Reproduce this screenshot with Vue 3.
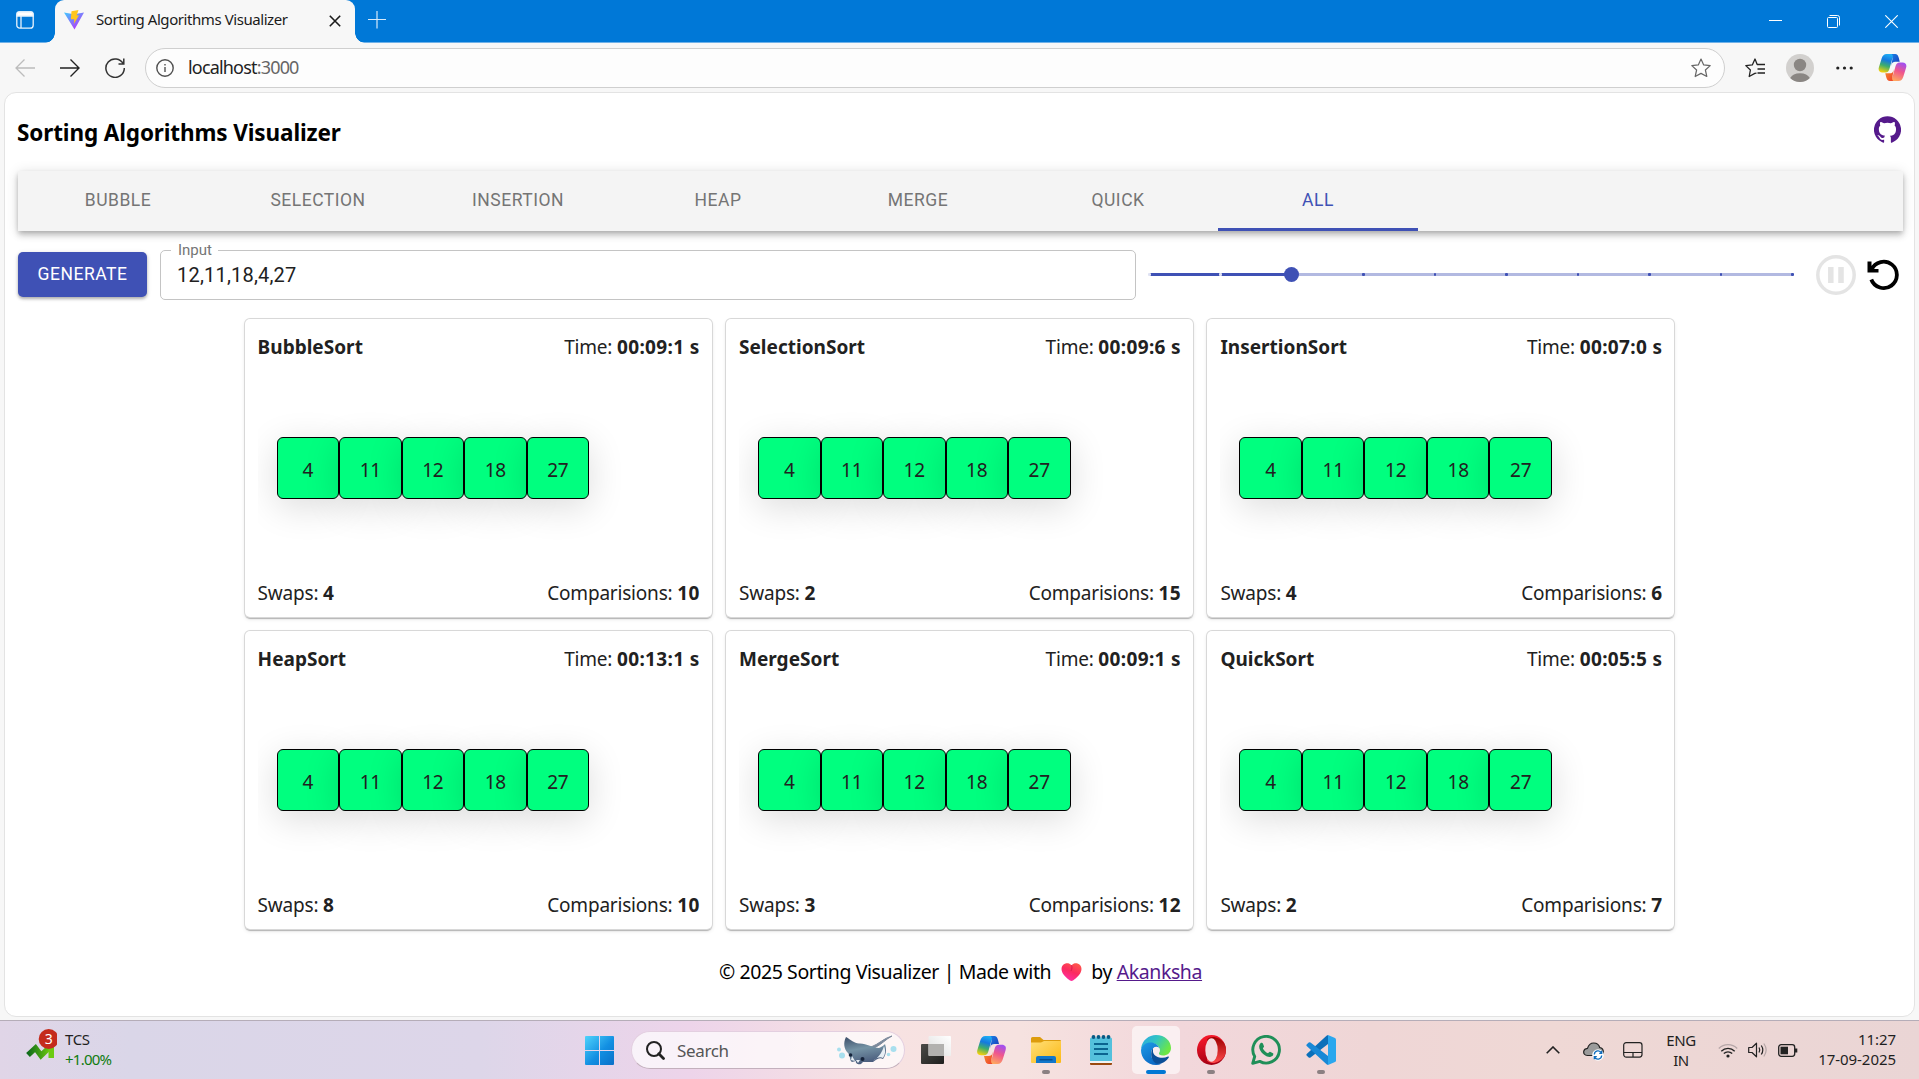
<script setup>
import { h } from 'vue'

const tabs = ['Bubble', 'Selection', 'Insertion', 'Heap', 'Merge', 'Quick', 'All']
const active = 'All'
const values = [4, 11, 12, 18, 27]
const marks = [0, 1, 2, 3, 4, 5, 6, 7, 8, 9]
const speed = 2

const sorts = [
  { name: 'BubbleSort', time: '00:09:1', swaps: 4, comparisons: 10 },
  { name: 'SelectionSort', time: '00:09:6', swaps: 2, comparisons: 15 },
  { name: 'InsertionSort', time: '00:07:0', swaps: 4, comparisons: 6 },
  { name: 'HeapSort', time: '00:13:1', swaps: 8, comparisons: 10 },
  { name: 'MergeSort', time: '00:09:1', swaps: 3, comparisons: 12 },
  { name: 'QuickSort', time: '00:05:5', swaps: 2, comparisons: 7 },
]

const CopilotIcon = (props) =>
  h('svg', { viewBox: '0 0 30 28', width: props.width, height: props.height }, [
    h('path', { d: 'M19 1.2C18.500 0.300 17.600 0 16.500 0H9C6.200 0 4.600 1.800 3.800 4.500L1 13.500C-0.200 17 1.400 19.200 4.600 19.200H7.500C10 19.200 11 18 11.800 15.500L14.500 6C15.500 3 16.500 1.500 19 1.200Z', fill: 'url(#cp-a)' }),
    h('path', { d: 'M14 0H17.500C20 0 20.800 1.500 21.500 4L22.500 8H18C15.500 8 14.800 8.800 14 11L13.500 12.500L15 5C15.800 3 15.500 1 14 0Z', fill: 'url(#cp-b)' }),
    h('path', { d: 'M11 26.800C11.500 27.700 12.400 28 13.500 28H21C23.800 28 25.400 26.200 26.200 23.500L29 14.500C30.200 11 28.600 8.800 25.400 8.800H22.500C20 8.800 19 10 18.200 12.500L15.500 22C14.500 25 13.500 26.500 11 26.800Z', fill: 'url(#cp-c)' }),
    h('path', { d: 'M16 28H12.500C10 28 9.200 26.500 8.500 24L7.500 20H12C14.500 20 15.200 19.200 16 17L16.500 15.500L15 23C14.200 25 14.500 27 16 28Z', fill: 'url(#cp-d)' }),
  ])
CopilotIcon.props = ['width', 'height']
</script>

<template>
  <div class="screen">
    <svg class="defs" width="0" height="0" aria-hidden="true">
      <defs>
        <linearGradient id="cp-a" x1="0.6" y1="0" x2="0.3" y2="1">
          <stop offset="0" stop-color="#1fb0f5" /><stop offset="0.35" stop-color="#1479e0" />
          <stop offset="0.65" stop-color="#3fae6b" /><stop offset="1" stop-color="#f4d00c" />
        </linearGradient>
        <linearGradient id="cp-b" x1="0" y1="0" x2="1" y2="1">
          <stop offset="0" stop-color="#1a7fe6" /><stop offset="1" stop-color="#1938b5" />
        </linearGradient>
        <linearGradient id="cp-c" x1="0.7" y1="0" x2="0.3" y2="1">
          <stop offset="0" stop-color="#a24ff0" /><stop offset="0.45" stop-color="#f0568c" />
          <stop offset="1" stop-color="#ffae5c" />
        </linearGradient>
        <linearGradient id="cp-d" x1="0" y1="0" x2="1" y2="1">
          <stop offset="0" stop-color="#f7902d" /><stop offset="1" stop-color="#ee3d2c" />
        </linearGradient>
      </defs>
    </svg>

    <header class="titlebar">
      <div class="workspace">
        <svg width="18" height="18" viewBox="0 0 18 18" fill="none" stroke="#e8f3fc" stroke-width="1.3">
          <rect x="0.8" y="0.8" width="16.400" height="16.400" rx="3" />
          <path d="M1 2.500Q1 1 3 1H15Q17 1 17 2.500V5H1Z" fill="#fff" />
          <path d="M5 5V17" />
        </svg>
      </div>
      <div class="tab">
        <svg class="favicon" width="20" height="20" viewBox="0 0 20 20">
          <defs>
            <linearGradient id="vt" x1="0" y1="0" x2="0.8" y2="1">
              <stop offset="0" stop-color="#41c9ff" /><stop offset="0.9" stop-color="#b03dfa" />
            </linearGradient>
          </defs>
          <path d="M0 2.600L10 4.300L20 2.600L10.500 19.500Z" fill="url(#vt)" />
          <path d="M7.500 1.200L14.500 0L12.600 5.500L15 5.200L9.800 14L10.300 9.200H6.800Z" fill="#ffc61c" />
        </svg>
        <span class="tab-title">Sorting Algorithms Visualizer</span>
        <svg class="tab-close" width="12" height="12" viewBox="0 0 12 12" stroke="#1b1b1b" stroke-width="1.6">
          <path d="M0.800 0.800L11.200 11.200M11.200 0.800L0.800 11.200" />
        </svg>
      </div>
      <svg class="new-tab" width="18" height="18" viewBox="0 0 18 18" stroke="#d6eafa" stroke-width="1.2">
        <path d="M9 0V17.500M0 8.500H18" />
      </svg>
      <div class="win-controls">
        <svg width="13" height="13" viewBox="0 0 13 13" stroke="#fff"><path d="M0 6.500H13" /></svg>
        <svg width="13" height="13" viewBox="0 0 13 13" fill="none" stroke="#fff">
          <rect x="0.500" y="2.500" width="10" height="10" rx="1" />
          <path d="M2.500 0.500H10.500Q12.500 0.500 12.500 2.500V10.500" />
        </svg>
        <svg width="13" height="13" viewBox="0 0 13 13" stroke="#fff" stroke-width="1.1"><path d="M0.300 0.300L12.700 12.700M12.700 0.300L0.300 12.700" /></svg>
      </div>
    </header>

    <div class="toolbar">
      <svg class="nav" width="20" height="20" viewBox="0 0 20 20" fill="none" stroke="#bcbcbc" stroke-width="1.300">
        <path d="M9.500 1.500L1 10L9.500 18.500M1 10H20" />
      </svg>
      <svg class="nav" width="20" height="20" viewBox="0 0 20 20" fill="none" stroke="#222" stroke-width="1.400">
        <path d="M10.500 1.500L19 10L10.500 18.500M19 10H0" />
      </svg>
      <svg class="nav" width="20" height="20" viewBox="0 0 20 20" fill="none" stroke="#333" stroke-width="1.500">
        <path d="M18.300 6A9.200 9.200 0 1 0 19.300 10M18.800 0.500V6H13.500" />
      </svg>
      <div class="address">
        <svg width="18" height="18" viewBox="0 0 18 18" fill="none" stroke="#505050" stroke-width="1.400">
          <circle cx="9" cy="9" r="8.200" /><path d="M9 8V13M9 5V6.500" />
        </svg>
        <span class="url">localhost<i>:3000</i></span>
        <svg class="star" width="20" height="20" viewBox="0 0 20 20" fill="none" stroke="#666" stroke-width="1.200" stroke-linejoin="round">
          <path d="M10 1L12.700 6.900L19.200 7.600L14.400 12L15.800 18.500L10 15.400L4.200 18.500L5.600 12L0.800 7.600L7.300 6.900Z" />
        </svg>
      </div>
      <svg class="favs" width="20" height="20" viewBox="0 0 20 20" fill="none" stroke="#222" stroke-width="1.300" stroke-linejoin="round">
        <path d="M11.500 15.200L9.800 15.400L4.200 18.500L5.400 12L0.800 7.600L7.300 6.900L10 1L12.200 6.500H20M12.500 11H20M12.500 15H20" />
      </svg>
      <svg class="avatar" width="28" height="28" viewBox="0 0 28 28">
        <circle cx="14" cy="14" r="14" fill="#d2d0ce" />
        <circle cx="14" cy="11" r="6.200" fill="#8a8683" />
        <path d="M4.200 24A10.500 7.500 0 0 1 23.800 24A14 14 0 0 1 4.200 24Z" fill="#8a8683" />
      </svg>
      <svg class="dots" width="17" height="4" viewBox="0 0 17 4" fill="#222">
        <circle cx="1.800" cy="2" r="1.600" /><circle cx="8.500" cy="2" r="1.600" /><circle cx="15.200" cy="2" r="1.600" />
      </svg>
      <CopilotIcon class="copilot" width="29" height="27" />
    </div>

    <main class="page">
      <div class="heading">
        <h3>Sorting Algorithms Visualizer</h3>
        <svg width="27" height="27" viewBox="0 0 24 24" fill="#551a8b">
          <path d="M12 .3a12 12 0 0 0-3.800 23.400c.6.1.8-.3.8-.6v-2c-3.300.7-4-1.600-4-1.600-.6-1.400-1.400-1.800-1.400-1.800-1-.7.1-.7.1-.7 1.200 0 1.900 1.200 1.900 1.200 1 1.800 2.800 1.300 3.500 1 0-.8.4-1.300.7-1.600-2.700-.3-5.500-1.300-5.500-6 0-1.200.5-2.300 1.300-3.100-.2-.4-.6-1.600 0-3.200 0 0 1-.3 3.400 1.200a11.500 11.500 0 0 1 6 0c2.300-1.500 3.300-1.200 3.300-1.200.6 1.600.2 2.800 0 3.200.9.8 1.300 1.900 1.300 3.200 0 4.600-2.800 5.600-5.500 5.900.5.4.9 1 .9 2.200v3.300c0 .3.1.7.8.6A12 12 0 0 0 12 .3" />
        </svg>
      </div>

      <nav class="tabs">
        <button v-for="t in tabs" :key="t" :class="{ active: t === active }">{{ t }}</button>
      </nav>

      <section class="controls">
        <button class="generate">Generate</button>
        <fieldset class="field">
          <legend>Input</legend>
          <span>12,11,18,4,27</span>
        </fieldset>
        <div class="slider">
          <div class="rail"></div>
          <div class="filled" :style="{ width: (speed / 9) * 100 + '%' }"></div>
          <i v-for="m in marks" :key="m" :class="{ on: m < speed }" :style="{ left: (m / 9) * 100 + '%' }"></i>
          <b :style="{ left: (speed / 9) * 100 + '%' }"></b>
        </div>
        <svg class="pause" width="40" height="40" viewBox="0 0 40 40" fill="none" stroke="#e4e4e4">
          <circle cx="20" cy="20" r="18.200" stroke-width="3.500" />
          <path d="M14.800 12V28M25 12V28" stroke-width="5.500" />
        </svg>
        <svg class="replay" width="32" height="32" viewBox="0 0 32 32" fill="none" stroke="#000" stroke-width="3.800">
          <path d="M4.300 20.500A13.200 13.200 0 1 0 4.600 10.500" />
          <path d="M0.500 2.500V13.500H11.500V10H7.500L4.500 6.500V2.500Z" fill="#000" stroke="none" />
        </svg>
      </section>

      <section class="grid">
        <article v-for="s in sorts" :key="s.name" class="card">
          <div class="row">
            <strong class="name">{{ s.name }}</strong>
            <span>Time: <strong>{{ s.time }} s</strong></span>
          </div>
          <div class="stage">
            <div v-for="v in values" :key="v" class="box">{{ v }}</div>
          </div>
          <div class="row">
            <span>Swaps: <strong>{{ s.swaps }}</strong></span>
            <span>Comparisions: <strong>{{ s.comparisons }}</strong></span>
          </div>
        </article>
      </section>

      <footer class="credit">
        <span>© 2025 Sorting Visualizer | Made with</span>
        <svg width="21" height="18" viewBox="0 0 21 18">
          <defs>
            <linearGradient id="ht" x1="0.800" y1="0" x2="0.300" y2="1">
              <stop offset="0" stop-color="#ff5a4a" /><stop offset="0.500" stop-color="#fb2a60" /><stop offset="1" stop-color="#ff2fa8" />
            </linearGradient>
          </defs>
          <path d="M10.500 2.300C12 0.300 14.500 -0.100 16.500 0.400C19.500 1.200 21 4 20.300 7.500C19.500 11.500 15.500 15 12 17.500Q10.500 18.400 9 17.500C5.500 15 1.500 11.500 0.700 7.500C0 4 1.500 1.200 4.500 0.400C6.500 -0.100 9 0.300 10.500 2.300Z" fill="url(#ht)" />
          <path d="M10.500 2.300C11.300 4 11 6 10 8" stroke="#d91a4e" fill="none" />
        </svg>
        <span>by <a>Akanksha</a></span>
      </footer>
    </main>

    <div class="taskbar">
      <div class="widget">
        <svg width="32" height="32" viewBox="0 0 32 32">
          <defs>
            <linearGradient id="gr"><stop offset="0" stop-color="#0f6b1a" /><stop offset="1" stop-color="#74d20f" /></linearGradient>
          </defs>
          <path d="M3 26L10.500 19L16 26.500L27 16" fill="none" stroke="url(#gr)" stroke-width="5.500" />
          <path d="M17 15H29V29H23.500V20Z" fill="#6ccb12" />
          <circle cx="23.700" cy="10" r="10" fill="#c42b1c" />
          <text x="23.700" y="15" text-anchor="middle" font-size="14" fill="#fff">3</text>
        </svg>
        <div class="stock"><span>TCS</span><span class="up">+1.00%</span></div>
      </div>

      <div class="apps">
        <svg class="start" width="29" height="29" viewBox="0 0 29 29">
          <defs>
            <linearGradient id="wn" gradientUnits="userSpaceOnUse" x1="0" y1="0" x2="29" y2="29">
              <stop offset="0" stop-color="#4fd3fb" /><stop offset="0.550" stop-color="#128fe2" /><stop offset="1" stop-color="#0a70c8" />
            </linearGradient>
          </defs>
          <path d="M1 0H14V14H0V1Q0 0 1 0ZM15 0H28Q29 0 29 1V14H15ZM0 15H14V29H1Q0 29 0 28ZM15 15H29V28Q29 29 28 29H15Z" fill="url(#wn)" />
        </svg>
        <div class="search">
          <svg width="19" height="19" viewBox="0 0 19 19" fill="none" stroke="#222">
            <circle cx="8" cy="8" r="7" stroke-width="2" /><path d="M12.800 12.800L17.500 17.500" stroke-width="2.800" stroke-linecap="round" />
          </svg>
          <span>Search</span>
          <svg class="manta" width="60" height="30" viewBox="0 0 60 30">
            <defs>
              <linearGradient id="mt" x1="0" y1="0" x2="0.300" y2="1">
                <stop offset="0" stop-color="#3c4d68" /><stop offset="0.500" stop-color="#7593a5" /><stop offset="1" stop-color="#4b5e7e" />
              </linearGradient>
            </defs>
            <path d="M34 12C42 9 47 3 55 1C49 4 44 10 37 13Z" fill="#7c899b" stroke="#7c899b" />
            <path d="M9 2C14 5 17 8 22 8.500C29 8 36 13 42 13C45 12 47 10 48 9C50 15 49 20 46 24C43 22 40 24 36 27C31 27 29 27 26 27L24 29C21 30 18 28 19 26L15 27C12 25 14 21 11 18C7 14 6 8 9 2Z" fill="url(#mt)" />
            <path d="M47 11C49 16 48 20 46 23C43 21 39 23 36 26C43 21 45 17 47 11ZM15 21L18 26L14 25ZM19 25H23L21 28Z" fill="#e7eef4" />
            <circle cx="13.500" cy="20" r="1.800" fill="#16243b" /><circle cx="25.500" cy="24" r="2" fill="#16243b" />
            <g fill="#a8dfee"><circle cx="2" cy="14.500" r="2" /><circle cx="5" cy="20.500" r="3" /><circle cx="56.500" cy="14" r="3" /><circle cx="51.500" cy="19.500" r="1.800" /></g>
          </svg>
        </div>

        <div class="app first">
          <svg width="30" height="28" viewBox="0 0 30 28">
            <defs>
              <linearGradient id="tv" x1="0" y1="0" x2="1" y2="1"><stop offset="0" stop-color="#4b4b48" /><stop offset="1" stop-color="#1f1f1e" /></linearGradient>
              <linearGradient id="tw" x1="0" y1="1" x2="1" y2="0"><stop offset="0" stop-color="#dedede" /><stop offset="1" stop-color="#fff" /></linearGradient>
            </defs>
            <rect y="8" width="23" height="20" rx="1" fill="url(#tv)" />
            <rect x="7.500" y="0" width="22.500" height="20" rx="1" fill="url(#tw)" />
            <path d="M7.500 8H23V20H8.500Q7.500 20 7.500 19Z" fill="#b2b1af" />
          </svg>
        </div>
        <div class="app"><CopilotIcon width="31" height="28" /></div>
        <div class="app running">
          <svg width="30" height="26" viewBox="0 0 30 26">
            <defs><linearGradient id="fd" x1="0" y1="0" x2="1" y2="1"><stop offset="0" stop-color="#ffdf79" /><stop offset="1" stop-color="#fcb914" /></linearGradient></defs>
            <path d="M0 1.500Q0 0 1.500 0H9L12.500 3H29Q30 3 30 4V12H0Z" fill="#dd9c0d" />
            <path d="M0 5.500H10L13 4H30V25Q30 26 29 26H1Q0 26 0 25Z" fill="url(#fd)" />
            <path d="M5 26V21Q5 19 7 19H23Q25 19 25 21V26Z" fill="#1277cb" /><path d="M8.500 22.700H21.500" stroke="#0a4f91" stroke-width="1.500" />
          </svg>
        </div>
        <div class="app">
          <svg width="22" height="30" viewBox="0 0 22 30">
            <path d="M0 25H22V29Q22 30 21 30H1Q0 30 0 29Z" fill="#9b4a10" /><path d="M0 24H22V28H0Z" fill="#f3f3f3" />
            <path d="M0 4Q0 2.500 1.500 2.500H20.500Q22 2.500 22 4V26H0Z" fill="#54c0dc" />
            <path d="M4 9H18M4 14H18M4 19H18" stroke="#0b6490" stroke-width="1.800" />
            <g fill="#075b85"><circle cx="3.500" cy="2" r="1.900" /><circle cx="8.500" cy="2" r="1.900" /><circle cx="13.500" cy="2" r="1.900" /><circle cx="18.500" cy="2" r="1.900" /></g>
          </svg>
        </div>
        <div class="app current">
          <svg width="30" height="30" viewBox="0 0 30 30">
            <defs>
              <linearGradient id="e1" x1="0" y1="0" x2="1" y2="0.500"><stop offset="0" stop-color="#2aa5e8" /><stop offset="0.500" stop-color="#32c5c2" /><stop offset="1" stop-color="#6ce745" /></linearGradient>
              <linearGradient id="e2" x1="0" y1="0" x2="0.600" y2="1"><stop offset="0" stop-color="#1e9be6" /><stop offset="1" stop-color="#0a68c4" /></linearGradient>
            </defs>
            <path d="M0 14C1 5 8 0 15 0C24 0 30 6 30 13C30 18 26 20.500 22 20.500C19 20.500 17.500 19.500 18 18C19 16 19.500 13 16 10C11 6 4 8 0 14Z" fill="url(#e1)" />
            <path d="M0 15C1 10 5 7.500 9.500 7.500C14 7.500 17 10 18.500 13C15 10.500 10 13 10 18.500C10 25 15 29 21 28.500C19 29.500 17 30 15 30C6 30 0 23 0 15Z" fill="url(#e2)" />
            <path d="M12 13C9 17 9.500 25 15 28.500C20 30 25 26.500 27.800 22.500C28 21.500 27.500 21.300 27 21.600C21 24.500 13 22 12 17Z" fill="#0b4f98" />
            <path d="M12.500 13C15 10.500 18.500 12 18.800 15C18.900 17 17.500 17.500 18 19C15 20 12 17 12.500 13Z" fill="#faedf0" />
          </svg>
        </div>
        <div class="app running">
          <svg width="29" height="30" viewBox="0 0 29 30">
            <defs>
              <linearGradient id="op" x1="0" y1="0" x2="0.200" y2="1"><stop offset="0" stop-color="#ff1b2d" /><stop offset="1" stop-color="#a70014" /></linearGradient>
              <linearGradient id="oq" x1="0" y1="0" x2="0" y2="1"><stop offset="0" stop-color="#9c0000" /><stop offset="1" stop-color="#ff4b4b" /></linearGradient>
            </defs>
            <ellipse cx="14.500" cy="15" rx="14.500" ry="15" fill="url(#op)" />
            <path d="M10 4.500C12 2.500 15 1.700 18 2.300C25 4 29 9 29 15C29 21 25 26 18 27.700C15 28.300 12 27.500 10 25.500Z" fill="url(#oq)" />
            <ellipse cx="14.500" cy="15" rx="6.200" ry="11.800" fill="#f3dadd" />
          </svg>
        </div>
        <div class="app">
          <svg width="30" height="30" viewBox="0 0 30 30" fill="none" stroke="#1f8f58">
            <path d="M1.700 28.300L3.700 21.500A13.300 13.300 0 1 1 8.800 26.400Z" stroke-width="2.900" stroke-linejoin="round" />
            <path d="M9.500 8.200C10.200 7.500 11.500 7.600 11.900 8.500L13 11.300C13.200 12 12 13 11.900 13.500C13 15.800 14.800 17.300 17 18.200C17.700 18 18.300 16.600 19 16.800L22 18.300C22.800 18.800 22 20.600 21.300 21.100C19 23 15 21.500 12.500 19.300C9 16.500 6.500 11.500 9.500 8.200Z" fill="#1f8f58" stroke="none" />
          </svg>
        </div>
        <div class="app running">
          <svg width="30" height="30" viewBox="0 0 30 30">
            <path d="M22 0L29 3Q30 3.500 30 4.500V25.500Q30 26.500 29 27L22 30Z" fill="#2aa7ee" />
            <path d="M22 0V9L4.500 22.500Q3.500 23 2.700 22.500L0.600 20.500Q0 19.500 0.700 19L20.500 0.700Z" fill="#0b6fb9" />
            <path d="M22 30V21L4.500 7.500Q3.500 7 2.700 7.500L0.600 9.500Q0 10.500 0.700 11L20.500 29.300Z" fill="#1888d6" />
          </svg>
        </div>
      </div>

      <div class="tray">
        <svg width="14" height="8" viewBox="0 0 14 8" fill="none" stroke="#222" stroke-width="1.600"><path d="M0.700 7.300L7 1L13.300 7.300" /></svg>
        <svg class="cloud" width="21" height="19" viewBox="0 0 21 19">
          <path d="M4.500 13.500C1.500 13.500 0.500 11.500 0.700 9.500C1 7.500 2.500 6.500 4.500 6.300C5.500 3 8 1 10.700 1C14 1 16 3 16.700 5.500C19 6 20.300 7.500 20.300 9.500C20.300 12 18.500 13.500 16.500 13.500Z" fill="#9b9b9b" stroke="#222" stroke-width="1.200" />
          <circle cx="15" cy="13" r="5.800" fill="#fff" />
          <path d="M11.300 12.500A3.800 3.800 0 0 1 18.500 11M18.700 13.500A3.800 3.800 0 0 1 11.500 15M18.700 8.800V11.300H16.200M11.300 17.200V14.700H13.800" fill="none" stroke="#0f6cbd" stroke-width="1.300" />
        </svg>
        <svg class="pad" width="20" height="16" viewBox="0 0 20 16" fill="none" stroke="#222" stroke-width="1.200">
          <rect x="0.700" y="0.700" width="18.300" height="14.400" rx="2.500" /><path d="M0.700 10.500H19M10 10.500V15" />
        </svg>
        <div class="lang"><span>ENG</span><span>IN</span></div>
        <svg class="wifi" width="20" height="15" viewBox="0 0 20 15" fill="none" stroke="#222" stroke-width="1.300">
          <path d="M0.800 5.500A13 13 0 0 1 19.200 5.500" stroke="#b5a6a7" />
          <path d="M3.300 8.200A9.500 9.500 0 0 1 16.700 8.200M5.800 10.500A6 6 0 0 1 14.200 10.500" />
          <circle cx="10" cy="13" r="1.600" fill="#222" stroke="none" />
        </svg>
        <svg class="vol" width="20" height="16" viewBox="0 0 20 16" fill="none" stroke="#222" stroke-width="1.200" stroke-linejoin="round">
          <path d="M0.700 5.500H4L8.500 1.200V14.800L4 10.500H0.700ZM11 5.500Q12.500 8 11 10.500M13.300 3.500Q16.300 8 13.300 12.500" />
          <path d="M15.800 1.500Q20.500 8 15.800 14.500" stroke="#b5a6a7" />
        </svg>
        <svg class="batt" width="20" height="13" viewBox="0 0 20 13" fill="none" stroke="#222" stroke-width="1.300">
          <rect x="0.700" y="0.700" width="16" height="11.600" rx="2.500" /><rect x="2.500" y="2.700" width="7.500" height="7.600" fill="#222" stroke="none" />
          <path d="M18 4.500V8.500" stroke-width="2.600" />
        </svg>
        <div class="clock"><span>11:27</span><span>17-09-2025</span></div>
      </div>
    </div>
  </div>
</template>

<style>
body {
  margin: 0;
  overflow: hidden;
}
</style>

<style scoped>
* {
  box-sizing: border-box;
}
svg {
  flex: none;
  display: block;
}
.defs {
  position: absolute;
}
.screen {
  width: 1919px;
  height: 1079px;
  display: flex;
  flex-direction: column;
  background: #f7f7f7;
  font-family: 'Noto Sans', 'Open Sans', sans-serif;
  overflow: hidden;
  white-space: nowrap;
}

/* browser chrome */
.titlebar {
  height: 43px;
  flex: none;
  display: flex;
  background: #0078d7;
  border-bottom: 1px solid #6fb1e8;
}
.workspace {
  width: 55px;
  padding: 11px 0 0 16px;
}
.tab {
  position: relative;
  width: 300px;
  height: 43px;
  display: flex;
  align-items: flex-start;
  padding: 10px 14px 0 9px;
  background: #f7f7f7;
  border-radius: 9px 9px 0 0;
}
.tab::before,
.tab::after {
  content: '';
  position: absolute;
  bottom: 0;
  width: 10px;
  height: 10px;
}
.tab::before {
  left: -10px;
  background: radial-gradient(circle at 0 0, transparent 9.500px, #f7f7f7 10px);
}
.tab::after {
  right: -10px;
  background: radial-gradient(circle at 100% 0, transparent 9.500px, #f7f7f7 10px);
}
.tab-title {
  margin: -2px auto 0 12px;
  font-size: 15px;
  line-height: 22px;
  letter-spacing: -0.430px;
  color: #1b1b1b;
}
.tab-close {
  margin-top: 5px;
}
.new-tab {
  margin: 11px 0 0 13px;
}
.win-controls {
  margin-left: auto;
  display: flex;
  gap: 45px;
  padding: 15px 21px 0 0;
}
.win-controls svg:first-child {
  margin-top: -1px;
}
.toolbar {
  height: 49px;
  flex: none;
  display: flex;
  align-items: center;
  padding: 0 12px 0 15px;
}
.nav {
  margin-right: 25px;
}
.nav:nth-child(3) {
  margin-right: 20px;
}
.address {
  width: 1580px;
  height: 40px;
  display: flex;
  align-items: center;
  padding: 0 13px 0 10px;
  background: #fdfdfd;
  border: 1px solid #cfcfcf;
  border-radius: 20px;
}
.url {
  margin: -1px 0 0 14px;
  font-size: 18px;
  letter-spacing: -0.820px;
  color: #222;
}
.url i {
  font-style: normal;
  color: #666;
}
.star {
  margin-left: auto;
}
.favs {
  margin-left: 20px;
}
.avatar {
  margin-left: 21px;
}
.dots {
  margin-left: 22px;
}
.copilot {
  margin-left: auto;
}

/* page */
.page {
  width: 1911px;
  height: 925px;
  flex: none;
  margin-left: 4px;
  padding: 0 11px 0 13px;
  background: #fff;
  border: 1px solid #e3e3e3;
  border-radius: 12px;
}
.heading {
  display: flex;
  justify-content: space-between;
  height: 78px;
  padding: 23px 2px 0 0;
}
h3 {
  margin: 0 0 0 -1px;
  font-size: 22.500px;
  line-height: 34px;
  letter-spacing: -0.120px;
  color: #000;
}
.tabs {
  display: flex;
  height: 60px;
  background: #f4f4f4;
  box-shadow: 0 2px 5px -1px rgba(0, 0, 0, 0.2), 0 5px 6px rgba(0, 0, 0, 0.14), 0 1px 12px rgba(0, 0, 0, 0.12);
}
button {
  font-family: Roboto, sans-serif;
  text-transform: uppercase;
  border: 0;
  background: none;
  padding: 0;
  font-size: 17.500px;
  letter-spacing: 0.500px;
}
.tabs button {
  width: 200px;
  color: #757575;
  border-bottom: 3px solid transparent;
}
.tabs button.active {
  color: #3f51b5;
  border-bottom-color: #3f51b5;
}
.controls {
  display: flex;
  align-items: flex-start;
  height: 88px;
  padding-top: 21px;
}
.generate {
  width: 129px;
  height: 45px;
  padding-bottom: 2px;
  border-radius: 5px;
  background: #3f51b5;
  color: #fff;
  box-shadow: 0 2px 3px rgba(0, 0, 0, 0.25), 0 1px 5px rgba(0, 0, 0, 0.12);
}
.field {
  width: 976px;
  height: 58px;
  margin: -10px 0 0 13px;
  padding: 0 17px 0 10px;
  border: 1px solid #c4c4c4;
  border-radius: 5px;
  font-family: Roboto, sans-serif;
}
.field legend {
  padding: 0 6px 0 7px;
  font-size: 15px;
  line-height: 17px;
  color: #757575;
}
.field span {
  display: block;
  margin: 4px 0 0 6px;
  font-size: 20px;
  line-height: 24px;
  letter-spacing: 0.200px;
  color: #212121;
}
.slider {
  position: relative;
  width: 643px;
  height: 3px;
  margin: 21px 0 0 13px;
}
.rail,
.filled {
  position: absolute;
  inset: 0;
  background: #b2b9e1;
}
.filled {
  right: auto;
  background: #3f51b5;
}
.slider i {
  position: absolute;
  top: 0;
  width: 2.500px;
  height: 3px;
  margin-left: -1px;
  border-radius: 1px;
  background: #3f51b5;
}
.slider i.on {
  background: #dfe2f3;
}
.slider b {
  position: absolute;
  top: -6px;
  width: 15px;
  height: 15px;
  margin-left: -8px;
  border-radius: 50%;
  background: #3f51b5;
}
.pause {
  margin: 3px 0 0 24px;
}
.replay {
  margin: 7px 0 0 11px;
}
.grid {
  display: grid;
  grid-template-columns: repeat(3, 467px);
  grid-auto-rows: 298px;
  gap: 14px 14.400px;
  justify-content: center;
  margin-left: -2px;
}
.card {
  display: flex;
  flex-direction: column;
  padding: 13px 12px 9px 13px;
  background: #fff;
  border-radius: 5px;
  color: #212121;
  font-size: 19px;
  letter-spacing: -0.200px;
  box-shadow: 0 0 0 1px #d8d8d8, 0 2px 1px #b4b4b4, 0 2px 4px rgba(0, 0, 0, 0.12);
}
.row {
  display: flex;
  justify-content: space-between;
  line-height: 30px;
}
.row strong {
  letter-spacing: 0.350px;
}
.row .name {
  letter-spacing: 0.020px;
}
.stage {
  flex: 1;
  display: flex;
  align-items: center;
  padding: 0 0 4px 19px;
  overflow: hidden;
}
.box {
  width: 62.500px;
  height: 62.500px;
  display: flex;
  align-items: center;
  justify-content: center;
  padding-top: 3px;
  background: #00ff7f;
  border: 1px solid #000;
  border-radius: 6px;
  box-shadow: 0 8px 36px rgba(0, 0, 0, 0.14);
}
.credit {
  display: flex;
  justify-content: center;
  align-items: center;
  margin-top: 28px;
  font-size: 19.500px;
  line-height: 30px;
  letter-spacing: -0.400px;
  color: #000;
}
.credit svg {
  margin: 0 9px 0 10px;
}
.credit a {
  color: #551a8b;
  text-decoration: underline;
}

/* taskbar */
.taskbar {
  display: flex;
  align-items: center;
  height: 59px;
  flex: none;
  margin-top: 3px;
  border-top: 1px solid #b5adb8;
  background: linear-gradient(90deg, #e0d5e7 0, #dad6e8 130px, #ddd6e9 480px, #edd4ea 690px, #f7e2e2 880px, #f6e2e0 1020px, #f2d7db 1180px, #efd6d6 1370px, #efd8d5 1550px, #ead5d5 1919px);
}
.widget {
  width: 585px;
  display: flex;
  align-items: center;
}
.widget svg {
  margin: -10px 0 0 25px;
}
.stock,
.lang,
.clock {
  display: flex;
  flex-direction: column;
  font-size: 15px;
  line-height: 20px;
  letter-spacing: -0.400px;
  color: #1f1f1f;
}
.stock {
  margin: -2px 0 0 8px;
}
.stock .up {
  color: #107c10;
  letter-spacing: -0.750px;
}
.apps {
  display: flex;
  align-items: center;
}
.search {
  width: 274px;
  height: 38px;
  display: flex;
  align-items: center;
  margin-left: 17px;
  padding: 0 7px 0 14px;
  border: 1px solid #e3cfe0;
  border-bottom-color: #c3b0bd;
  border-radius: 19px;
  background: rgba(255, 255, 255, 0.7);
}
.search span {
  margin: 0 auto 0 12px;
  font-size: 17px;
  letter-spacing: -0.350px;
  color: #555;
}
.app {
  position: relative;
  width: 48px;
  height: 48px;
  display: flex;
  align-items: center;
  justify-content: center;
  margin-left: 7px;
}
.app.current {
  background: rgba(255, 255, 255, 0.6);
  border-radius: 5px;
}
.app.running::after,
.app.current::after {
  content: '';
  position: absolute;
  bottom: 0;
  width: 8px;
  height: 4px;
  border-radius: 2px;
  background: #8b8082;
}
.app.current::after {
  width: 20px;
  background: #0078d4;
}
.tray {
  display: flex;
  align-items: center;
  margin-left: auto;
  padding-right: 23px;
}
.cloud {
  margin: 2px 0 0 23px;
}
.pad {
  margin-left: 19px;
}
.lang {
  width: 34px;
  margin-left: 21px;
  align-items: center;
}
.wifi {
  margin-left: 20px;
}
.vol {
  margin-left: 10px;
}
.batt {
  margin-left: 10px;
}
.clock {
  width: 98px;
  margin-top: -2px;
  align-items: flex-end;
  letter-spacing: -0.050px;
}
</style>
